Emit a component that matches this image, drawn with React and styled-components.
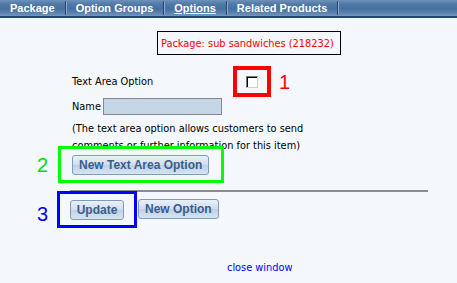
import React from "react";
import styled, { createGlobalStyle, css } from "styled-components";

const GlobalStyle = createGlobalStyle`
  html, body {
    margin: 0;
    background: #f4f7fb;
    font-family: "DejaVu Sans", Verdana, sans-serif;
    font-size: 9.8px;
    color: #000;
  }
`;

const Page = styled.div`
  width: 457px;
  height: 283px;
  overflow: hidden;
  background: #f4f7fb;
`;

const TabBar = styled.div`
  height: 16px;
  display: flex;
  align-items: stretch;
  background: linear-gradient(
    to bottom,
    #6d91bb 0%,
    #527aa8 25%,
    #44709f 55%,
    #5a82ae 80%,
    #7596bd 100%
  );
  border-bottom: 2px solid #23456e;
`;

const Tab = styled.a`
  display: flex;
  align-items: center;
  padding: 0 10px;
  font-family: "Liberation Sans", Arial, sans-serif;
  font-weight: bold;
  font-size: 11px;
  color: #fff;
  text-decoration: none;
  border-right: 1px solid #23456e;
  box-shadow: 1px 0 0 #8eaacb;
  margin: 1px 0;
  ${({ active }) =>
    active &&
    css`
      span {
        text-decoration: underline;
      }
    `}
`;

const Content = styled.div`
  padding-top: 13px;
`;

const PackageBox = styled.div`
  margin-left: 157px;
  width: 184px;
  height: 24px;
  box-sizing: border-box;
  border: 1px solid #000;
  display: flex;
  align-items: center;
  padding-left: 3px;
  white-space: nowrap;
  color: #ff0000;
`;

const Form = styled.div`
  margin-left: 72px;
  margin-top: 11px;
  display: flex;
  flex-direction: column;
`;

const Row = styled.div`
  display: flex;
  align-items: center;
`;

const Label = styled.span`
  width: ${({ w }) => w || "auto"};
`;

const Marker = styled.div`
  border: ${({ thick }) => thick || 3}px solid ${({ color }) => color};
  box-sizing: border-box;
  display: flex;
  align-items: center;
  justify-content: center;
`;

const Num = styled.span`
  font-family: "Liberation Sans", Arial, sans-serif;
  font-size: 20px;
  line-height: 1;
  color: ${({ color }) => color};
`;

const Checkbox = styled.span`
  display: inline-block;
  width: 10px;
  height: 10px;
  background: #fff;
  border: 1px solid;
  border-color: #7a7a7a #d4d0c8 #d4d0c8 #7a7a7a;
  box-shadow: inset 1px 1px 0 #000;
`;

const TextInput = styled.input`
  width: 119px;
  height: 17px;
  box-sizing: border-box;
  margin-left: 2px;
  background: #c5d7e6;
  border: 1px solid #888;
  padding: 0;
`;

const Note = styled.p`
  margin: 5px 0 0 0;
  line-height: 17px;
`;

const Button = styled.button`
  font-family: "Liberation Sans", Arial, sans-serif;
  font-weight: bold;
  font-size: 12px;
  color: #3b5d8c;
  height: 20px;
  padding: 0 6px;
  border: 1px solid #7d9cc0;
  border-radius: 3px;
  background: linear-gradient(to bottom, #e9f0f7 0%, #cfdeed 50%, #bdd1e6 51%, #d7e4f1 100%);
  cursor: pointer;
`;

const Divider = styled.hr`
  margin: 7px 0 0 70px;
  width: 358px;
  border: 0;
  border-top: 2px solid #8c8c8c;
  height: 0;
`;

const ButtonRow = styled.div`
  display: flex;
  align-items: flex-start;
  margin: -1px 0 0 37px;
`;

const CloseLink = styled.a`
  display: block;
  margin: 34px 0 0 227px;
  color: #0000ff;
  text-decoration: none;
`;

export default function App() {
  return (
    <Page>
      <GlobalStyle />
      <TabBar>
        <Tab href="#">
          <span>Package</span>
        </Tab>
        <Tab href="#">
          <span>Option Groups</span>
        </Tab>
        <Tab href="#" active>
          <span>Options</span>
        </Tab>
        <Tab href="#">
          <span>Related Products</span>
        </Tab>
      </TabBar>
      <Content>
        <PackageBox>Package: sub sandwiches (218232)</PackageBox>
        <Form>
          <Row style={{ height: 31 }}>
            <Label w="161px">Text Area Option</Label>
            <Marker color="#ff0000" thick={4} style={{ width: 38, height: 31 }}>
              <Checkbox />
            </Marker>
            <Num color="#ff0000" style={{ marginLeft: 8 }}>1</Num>
          </Row>
          <Row style={{ marginTop: 1 }}>
            <Label>Name</Label>
            <TextInput />
          </Row>
          <Note>
            (The text area option allows customers to send
            <br />
            comments or further information for this item)
          </Note>
        </Form>
        <Row style={{ marginTop: -8, marginLeft: 37 }}>
          <Num color="#00dd00" style={{ width: 21 }}>2</Num>
          <Marker color="#00ff00" style={{ width: 166, height: 37, justifyContent: "flex-start", paddingLeft: 11 }}>
            <Button>New Text Area Option</Button>
          </Marker>
        </Row>
        <Divider />
        <ButtonRow>
          <Num color="#0000ff" style={{ width: 20, marginTop: 13 }}>3</Num>
          <Marker color="#0000ff" style={{ width: 80, height: 37 }}>
            <Button>Update</Button>
          </Marker>
          <Button style={{ marginLeft: 1, marginTop: 8 }}>New Option</Button>
        </ButtonRow>
        <CloseLink href="#">close window</CloseLink>
      </Content>
    </Page>
  );
}
